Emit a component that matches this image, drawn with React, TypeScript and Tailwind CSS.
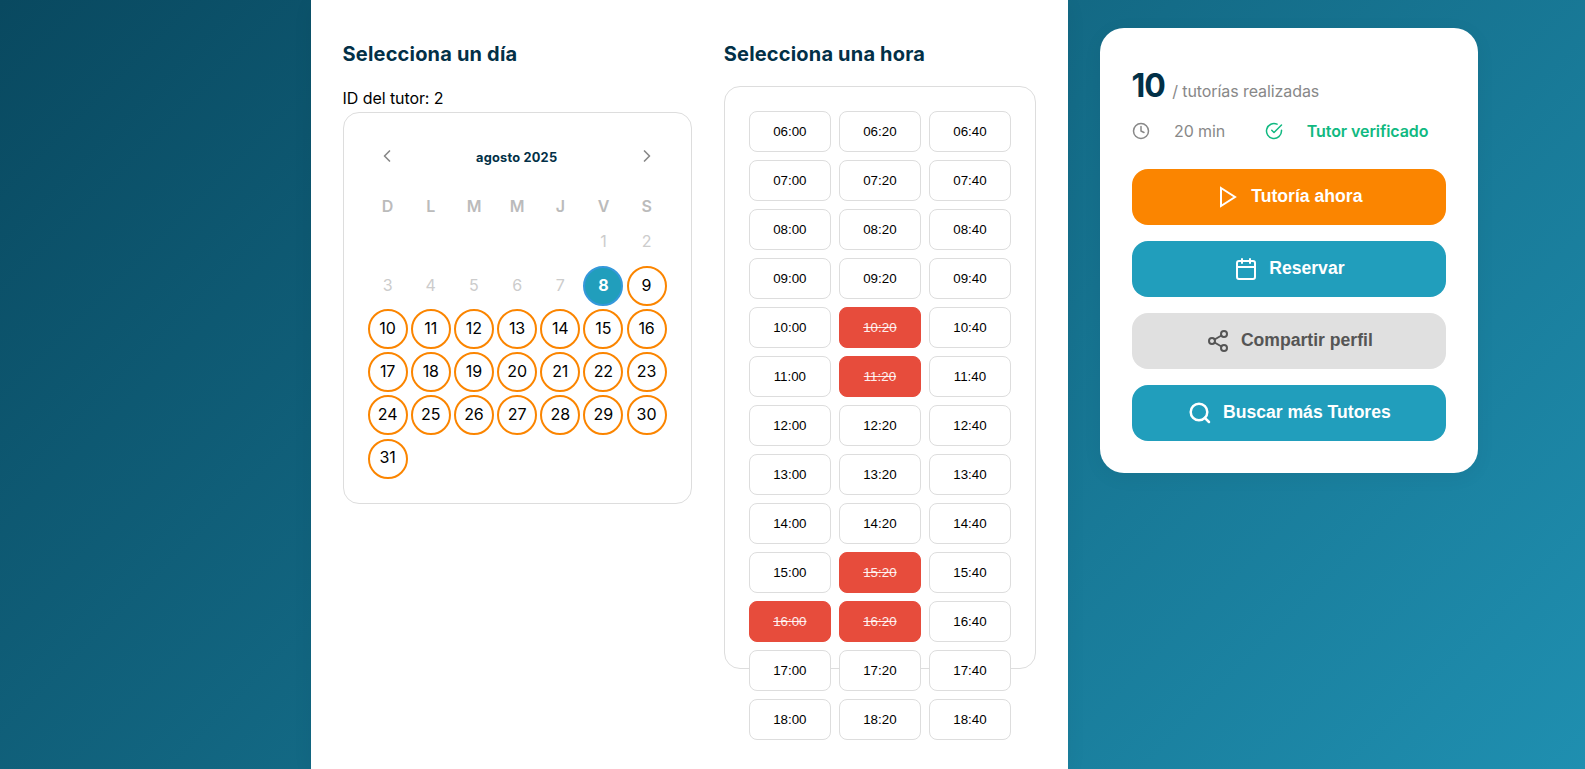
import React from "react";

const stroke = {
  fill: "none",
  stroke: "currentColor",
  strokeWidth: 2,
  strokeLinecap: "round" as const,
  strokeLinejoin: "round" as const,
  viewBox: "0 0 24 24",
};

const WEEKDAYS = ["D", "L", "M", "M", "J", "V", "S"];
const TODAY = 8;
const HOURS = ["06", "07", "08", "09", "10", "11", "12", "13", "14", "15", "16", "17", "18"];
const SLOTS = HOURS.flatMap((h) => ["00", "20", "40"].map((m) => `${h}:${m}`));
const TAKEN = new Set(["10:20", "11:20", "15:20", "16:00", "16:20"]);

function Day({ day }: { day: number }) {
  const base = "flex h-10 w-10 items-center justify-center rounded-full border-2 pb-[2.3px] text-base leading-6 ";
  if (day < TODAY) return <div className={base + "border-transparent text-[#cccccc]"}>{day}</div>;
  if (day === TODAY)
    return <div className={base + "border-[#3498db] bg-[#219ebc] font-bold text-white"}>{day}</div>;
  return <div className={base + "border-[#fb8500] text-black"}>{day}</div>;
}

function Calendar() {
  return (
    <div className="rounded-2xl border border-[#dddddd] px-6 pt-[23px] pb-6">
      <div className="flex h-10 items-center justify-between">
        <button className="flex h-10 w-[38px] items-center justify-center text-[#888888]">
          <svg {...stroke} className="h-5 w-5"><path d="M15 18l-6-6 6-6" /></svg>
        </button>
        <span className="pt-[3px] text-[12.8px] leading-5 font-bold tracking-[0.016em] text-[#023047]">agosto 2025</span>
        <button className="flex h-10 w-[39px] items-center justify-center text-[#888888]">
          <svg {...stroke} className="h-5 w-5"><path d="M9 18l6-6-6-6" /></svg>
        </button>
      </div>
      <div className="mt-[18px] grid grid-cols-7 gap-x-[3.2px] text-center font-semibold text-[#bbbbbb]">
        {WEEKDAYS.map((d, i) => (
          <div key={i} className="leading-6">{d}</div>
        ))}
      </div>
      <div className="mt-[4.6px] grid grid-cols-[repeat(7,40px)] gap-x-[3.16px] gap-y-[3.2px]">
        {Array.from({ length: 5 }, (_, i) => (
          <div key={`blank-${i}`} />
        ))}
        {Array.from({ length: 31 }, (_, i) => (
          <Day key={i} day={i + 1} />
        ))}
      </div>
    </div>
  );
}

function TimeGrid() {
  return (
    <div className="h-[583px] rounded-2xl border border-[#dddddd] p-6">
      <div className="grid grid-cols-3 gap-2">
        {SLOTS.map((t) => (
          <button
            key={t}
            className={
              "h-[41px] rounded-lg border font-['Liberation_Sans',Arial,sans-serif] text-[13.3333px] leading-[15px] tracking-normal " +
              (TAKEN.has(t)
                ? "border-[#e74c3c] bg-[#e74c3c] text-white/90 line-through"
                : "border-[#dddddd] bg-white text-black")
            }
          >
            {t}
          </button>
        ))}
      </div>
    </div>
  );
}

function ActionButton({ color, icon, label }: { color: string; icon: React.ReactNode; label: string }) {
  return (
    <button
      className={
        "flex h-14 w-full items-center justify-center gap-[11.2px] rounded-2xl pl-[0.6px] font-['Liberation_Sans',Arial,sans-serif] text-[17.6px] leading-5 font-bold tracking-normal " +
        color
      }
    >
      {icon}
      <span className="pb-[2px]">{label}</span>
    </button>
  );
}

function TutorCard() {
  return (
    <aside className="mt-7 ml-8 h-[445px] w-[378px] rounded-3xl bg-white p-8 shadow-[0_4px_20px_rgba(0,0,0,0.05)]">
      <div className="flex h-[52px] items-baseline gap-[7.3px]">
        <span className="ml-[-0.5px] text-[32px] leading-[52px] font-bold tracking-[-1px] text-[#023047]">10</span>
        <span className="text-base text-[#888888]">/ tutorías realizadas</span>
      </div>
      <div className="mt-[7px] flex h-6 items-center gap-[39.5px]">
        <div className="flex items-center gap-6 text-[#888888]">
          <svg {...stroke} className="h-[18px] w-[18px]">
            <circle cx="12" cy="12" r="10" />
            <path d="M12 6v6l4 2" />
          </svg>
          <span>20 min</span>
        </div>
        <div className="flex items-center gap-6 font-semibold text-[#10b981]">
          <svg {...stroke} className="h-[18px] w-[18px]">
            <path d="M22 11.08V12a10 10 0 1 1-5.93-9.14" />
            <path d="M22 4L12 14.01l-3-3" />
          </svg>
          <span>Tutor verificado</span>
        </div>
      </div>
      <div className="mt-[26px] flex flex-col gap-4">
        <ActionButton
          color="bg-[#fb8500] text-white"
          label="Tutoría ahora"
          icon={<svg {...stroke} strokeLinejoin="miter" className="h-6 w-6"><path d="M5 3l14 9-14 9V3z" /></svg>}
        />
        <ActionButton
          color="bg-[#219ebc] text-white"
          label="Reservar"
          icon={
            <svg {...stroke} className="h-6 w-6">
              <rect x="3" y="4" width="18" height="18" rx="2" />
              <path d="M16 2v4M8 2v4M3 10h18" />
            </svg>
          }
        />
        <ActionButton
          color="bg-[#e0e0e0] text-[#555555]"
          label="Compartir perfil"
          icon={
            <svg {...stroke} className="h-6 w-6">
              <circle cx="18" cy="5" r="3" />
              <circle cx="6" cy="12" r="3" />
              <circle cx="18" cy="19" r="3" />
              <path d="M8.59 13.51l6.83 3.98M15.41 6.51l-6.82 3.98" />
            </svg>
          }
        />
        <ActionButton
          color="bg-[#219ebc] text-white"
          label="Buscar más Tutores"
          icon={
            <svg {...stroke} strokeWidth={2.5} className="h-6 w-6">
              <circle cx="11" cy="11" r="8.3" />
              <path d="M21 21l-4.2-4.2" />
            </svg>
          }
        />
      </div>
    </aside>
  );
}

export default function App() {
  return (
    <div className="flex h-[769px] items-start overflow-hidden bg-[linear-gradient(135deg,#094960,#1f8fb0)] pl-[310.6px] font-['Inter',sans-serif] text-base tracking-[-0.005em] text-black">
      <main className="flex h-full w-[757.4px] shrink-0 gap-8 bg-white px-8 pt-10 shadow-[0_4px_20px_rgba(0,0,0,0.05)]">
        <section className="w-[349.2px] shrink-0">
          <h2 className="text-[20px] leading-7 font-bold tracking-[0.009em] text-[#023047]">Selecciona un día</h2>
          <p className="mt-[18px] h-[26px] leading-6">ID del tutor: 2</p>
          <Calendar />
        </section>
        <section className="flex-1">
          <h2 className="mb-[18px] text-[20px] leading-7 font-bold tracking-[0.009em] text-[#023047]">Selecciona una hora</h2>
          <TimeGrid />
        </section>
      </main>
      <TutorCard />
    </div>
  );
}
